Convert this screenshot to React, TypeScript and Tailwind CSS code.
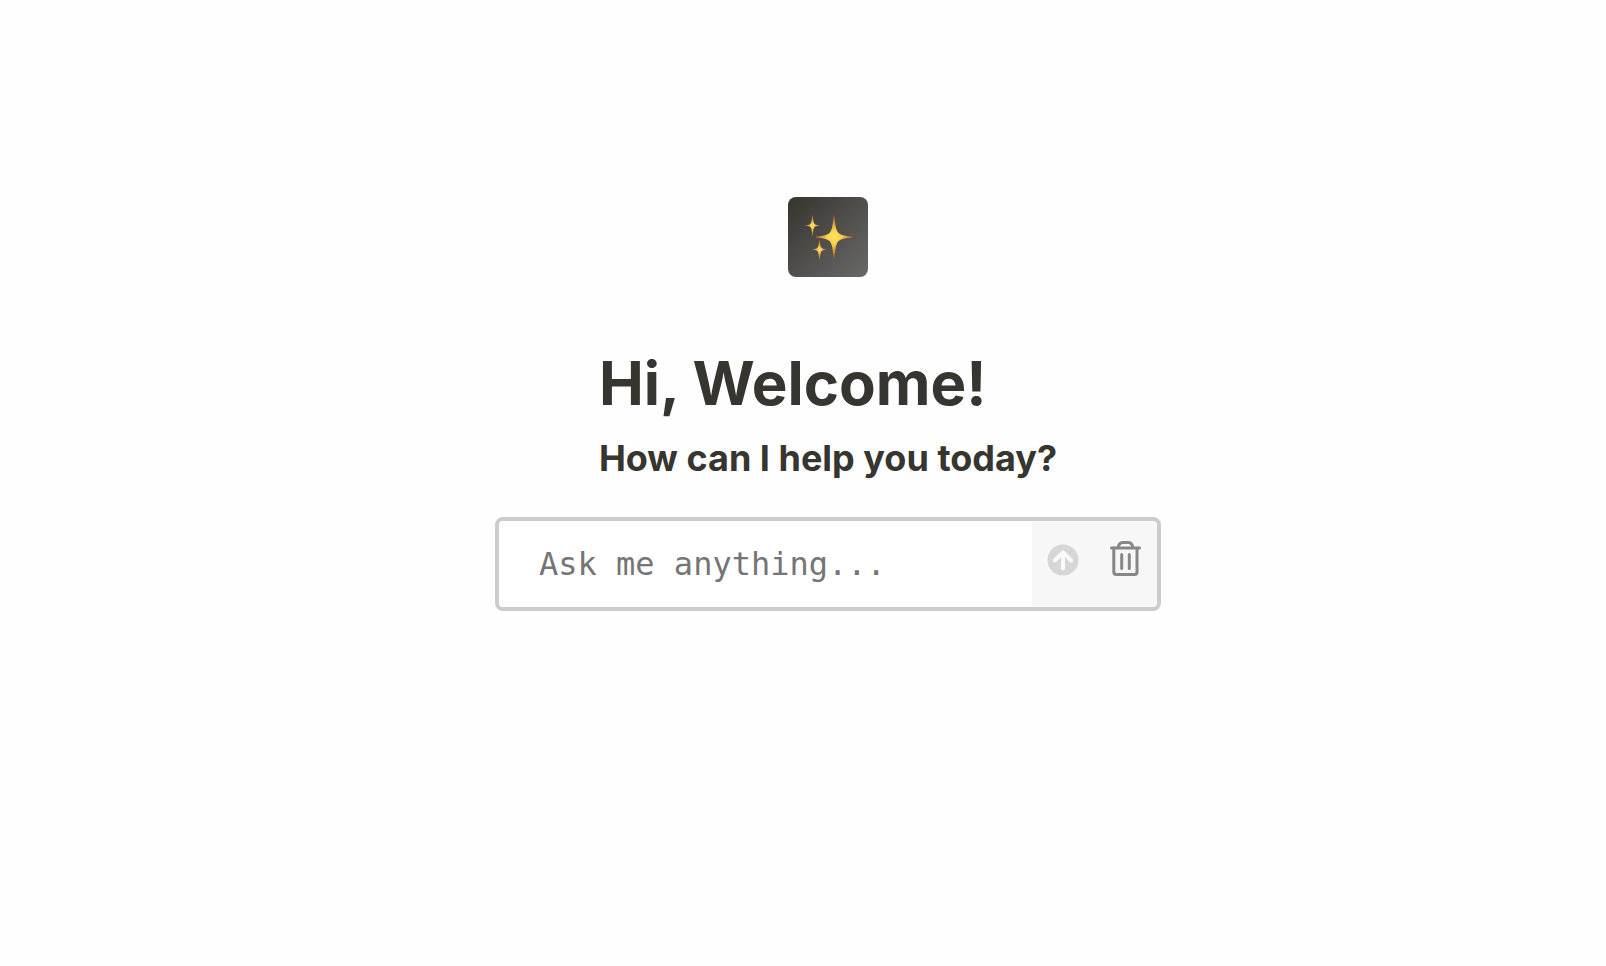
import React, { useState } from "react";

function Sparkles() {
  return (
    <svg viewBox="0 0 80 80" className="size-20" aria-hidden="true">
      <defs>
        <radialGradient id="big-star" gradientUnits="userSpaceOnUse" cx="46" cy="40" r="21">
          <stop offset="0" stopColor="#ffe263" />
          <stop offset="0.3" stopColor="#fbd64f" />
          <stop offset="0.6" stopColor="#dfa038" />
          <stop offset="1" stopColor="#94602f" />
        </radialGradient>
        <radialGradient id="small-star">
          <stop offset="0" stopColor="#ffe66e" />
          <stop offset="0.4" stopColor="#f3bd45" />
          <stop offset="1" stopColor="#91602f" />
        </radialGradient>
      </defs>
      <path
        fill="url(#big-star)"
        d="M45.600 18.500H46.400C47.300 29 48.200 34 50.800 36.200C53.500 38.400 57 38.900 64 39.600V40.400C57 41.100 53.500 41.600 50.800 43.800C48.200 46 47.300 51 46.400 62H45.600C44.700 51 43.800 46 41.200 43.800C38.500 41.600 35 41.100 28 40.400V39.600C35 38.900 38.500 38.400 41.200 36.200C43.800 34 44.700 29 45.600 18.500Z"
      />
      <path
        fill="url(#small-star)"
        d="M24.200 18.500H24.800C25.200 24 25.500 26 27 27.200C28.300 28 30 28.100 32 28.200V28.800C30 28.900 28.300 29 27 29.800C25.500 31 25.200 33 24.800 39H24.200C23.800 33 23.500 31 22 29.800C20.700 29 19 28.900 17 28.800V28.200C19 28.100 20.700 28 22 27.200C23.500 26 23.800 24 24.200 18.500Z"
      />
      <path
        fill="url(#small-star)"
        d="M31.200 43H31.800C32.200 48 32.500 50 34 51.200C35.300 52.100 37 52.100 39 52.200V52.800C37 52.900 35.300 53 34 53.800C32.500 55 32.200 57 31.800 63H31.200C30.800 57 30.500 55 29 53.800C27.700 53 26 52.900 24 52.800V52.200C26 52.100 27.700 52.100 29 51.200C30.500 50 30.800 48 31.200 43Z"
      />
    </svg>
  );
}

export default function App() {
  const [text, setText] = useState("");

  return (
    <main className="flex min-h-screen flex-col items-center bg-[#fefefe] pt-[197px] pl-[50px] font-['Inter','Liberation_Sans',sans-serif] text-[#37352f]">
      <div className="size-20 rounded-lg bg-linear-to-br from-[#37352f] to-[#696969]">
        <Sparkles />
      </div>

      <header className="mt-16 flex flex-col">
        <h1 className="text-[60px] leading-[84px] font-bold">Hi, Welcome!</h1>
        <h2 className="mt-2 text-[36px] leading-[50px] font-bold">How can I help you today?</h2>
      </header>

      <form
        className="mt-[34px] flex h-[94px] w-full max-w-[666px] overflow-hidden rounded-lg border-4 border-[#cccccc] bg-[#f7f7f7]"
        onSubmit={(event) => {
          event.preventDefault();
          setText("");
        }}
      >
        <input
          type="text"
          aria-label="Message"
          placeholder="Ask me anything..."
          value={text}
          onChange={(event) => setText(event.target.value)}
          className="min-w-0 flex-1 bg-white px-10 font-['DejaVu_Sans_Mono',monospace] text-[32px] outline-none placeholder:text-[#757575]"
        />
        <div className="flex w-[125px] items-start justify-between px-[15px] pt-5">
          <button type="submit" aria-label="Send" className="pt-[3px]">
            <svg viewBox="0 0 32 32" className="size-8" aria-hidden="true">
              <circle cx="16" cy="16" r="15.500" fill="#d6d6d6" />
              <path
                d="M16 24.500V9M7.800 16.500L16 8.300L24.200 16.500"
                fill="none"
                stroke="#f9f9f9"
                strokeWidth="4"
                strokeLinecap="round"
                strokeLinejoin="round"
              />
            </svg>
          </button>
          <button type="button" aria-label="Clear" onClick={() => setText("")}>
            <svg
              viewBox="0 0 32 36"
              className="h-9 w-8"
              fill="none"
              stroke="#878787"
              strokeWidth="3"
              strokeLinecap="round"
              aria-hidden="true"
            >
              <path d="M1.500 7H29.500" />
              <path d="M8 6.500C8.700 3.500 10 1.500 12.500 1.500H18.500C21 1.500 22.300 3.500 23 6.500" />
              <path d="M3.800 7V31Q3.800 33.500 6.300 33.500H24.500Q27 33.500 27 31V7" />
              <path d="M11.700 13.500V27.500M19.300 13.500V27.500" />
            </svg>
          </button>
        </div>
      </form>
    </main>
  );
}
